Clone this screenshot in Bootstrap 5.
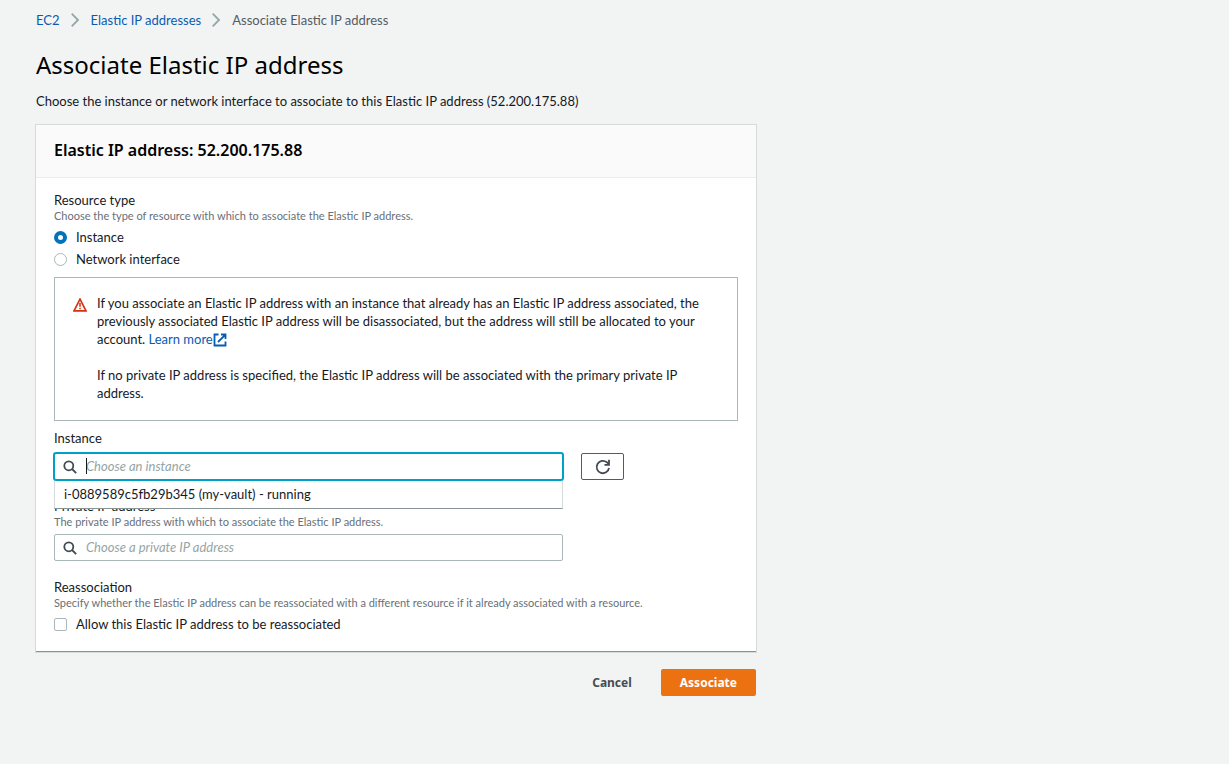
<!DOCTYPE html>
<html lang="en">
<head>
<meta charset="utf-8">
<meta name="viewport" content="width=device-width, initial-scale=1">
<title>Associate Elastic IP address</title>
<link href="https://cdn.jsdelivr.net/npm/bootstrap@5.3.0/dist/css/bootstrap.min.css" rel="stylesheet">
<style>
  body { background: #f2f4f4; color: #16191f; font-family: Lato, "Noto Sans", sans-serif; font-size: 13px; line-height: 18px; }
  a { color: #0a5bb0; text-decoration: none; }
  a:hover { text-decoration: underline; }
  .page { padding: 11px 36px 36px; }
  .page-col { max-width: 720px; }
  .breadcrumb { gap: 11px; margin-bottom: 21px; }
  .crumb-now { color: #545b64; }
  h1, h2, .btn { font-family: "Noto Sans", sans-serif; }
  h1 { font-size: 24px; line-height: 30px; font-weight: 400; color: #000; margin-bottom: 12px; }
  h2 { font-size: 16px; line-height: 22px; font-weight: 600; color: #000; }
  .panel { background: #fff; border-radius: 0; border: 0; outline: 1px solid #d5dbdb; border-bottom: 1px solid #879596; margin-top: 15px; }
  .panel > .card-header { background: #fafafa; border-bottom: 1px solid #eaeded; padding: 14px 18px 16px; border-radius: 0; }
  .panel > .card-body { padding: 14px 18px 18px; }
  .field-name { display: block; font-size: 13px; line-height: 16px; margin: 0; float: none; }
  .field-gap { margin-bottom: 7px; }
  .group { margin-top: 18px; }
  .hint { font-size: 11px; line-height: 16px; color: #687078; margin: 0 0 4px; }
  .form-check { display: flex; align-items: center; gap: 9px; min-height: 18px; padding: 0; margin: 0; }
  .form-check .form-check-input { float: none; margin: 0; width: 13px; height: 13px; border: 1px solid #aab7b8; box-shadow: none; }
  .form-check .form-check-input[type=checkbox] { border-radius: 2px; }
  .form-check .form-check-input[type=radio]:checked { background: #fff; border: 4px solid #0073bb; }
  .notice { border: 1px solid #aab7b8; border-radius: 0; padding: 16px 18px 18px; margin: 9px 0; gap: 10px; color: #16191f; }
  .search { position: relative; max-width: 509px; }
  .search .glass { position: absolute; left: 9px; top: 7px; pointer-events: none; }
  .search .form-control { height: 27px; padding: 0 10px 1px 31px; border: 1px solid #aab7b8; border-radius: 2px; font-size: 13px; line-height: 18px; }
  .search .form-control::placeholder { color: #95a5a6; font-style: italic; opacity: 1; }
  .search .form-control.is-open { border-color: #00a1c9; box-shadow: 0 0 0 1px #00a1c9; }
  .caret { position: absolute; left: 32px; top: 5px; width: 1px; height: 16px; background: #16191f; }
  .search .dropdown-menu { width: 100%; top: 100%; margin-top: 1px; padding: 0; min-width: 0; border: 1px solid #d5dbdb; border-top: 0; border-bottom-color: #879596; border-radius: 0; font-size: 13px; }
  .search .dropdown-item { padding: 4px 9px 5px; color: #16191f; line-height: 18px; }
  .instance-row { gap: 18px; }
  .actions { gap: 19px; margin-top: 17px; }
  .btn { font-size: 12px; line-height: 19px; font-weight: 700; border-radius: 2px; border: 0; }
  .btn-reload { width: 43px; height: 27px; padding: 0; border: 1px solid #545b64; background: #fff; }
  .btn-plain { color: #444c56; padding: 4px 10px; }
  .btn-go, .btn-go:hover { background: #ec7211; color: #fff; padding: 4px 19px; }
</style>
</head>
<body>
<main class="page">
  <nav aria-label="breadcrumb">
    <ol class="breadcrumb align-items-center">
      <li><a href="#">EC2</a></li>
      <li class="d-flex" aria-hidden="true"><svg width="9" height="14" viewBox="0 0 9 14" fill="none" stroke="#95a5a6" stroke-width="1.800"><path d="M.7.7L7 7 .7 13.300"/></svg></li>
      <li><a href="#">Elastic IP addresses</a></li>
      <li class="d-flex" aria-hidden="true"><svg width="9" height="14" viewBox="0 0 9 14" fill="none" stroke="#95a5a6" stroke-width="1.800"><path d="M.7.7L7 7 .7 13.300"/></svg></li>
      <li class="crumb-now" aria-current="page">Associate Elastic IP address</li>
    </ol>
  </nav>
  <h1>Associate Elastic IP address</h1>
  <p class="mb-0">Choose the instance or network interface to associate to this Elastic IP address (52.200.175.88)</p>

  <form class="page-col">
    <section class="card panel">
      <div class="card-header"><h2 class="mb-0">Elastic IP address: 52.200.175.88</h2></div>
      <div class="card-body">
        <fieldset>
          <legend class="field-name">Resource type</legend>
          <p class="hint">Choose the type of resource with which to associate the Elastic IP address.</p>
          <div class="d-grid gap-1">
            <div class="form-check"><input class="form-check-input" type="radio" name="kind" id="kind-instance" checked><label for="kind-instance">Instance</label></div>
            <div class="form-check"><input class="form-check-input" type="radio" name="kind" id="kind-network"><label for="kind-network">Network interface</label></div>
          </div>
        </fieldset>

        <div class="notice d-flex align-items-start" role="note">
          <svg class="flex-shrink-0 mt-1" width="14" height="14" viewBox="0 0 14 14" fill="none" stroke="#d13212"><path d="M7 1.200L13 12.800H1z" stroke-width="1.700"/><path d="M7 5v3.700M7 9.700v1.500" stroke-width="1.500"/></svg>
          <div>
            <p class="mb-0">If you associate an Elastic IP address with an instance that already has an Elastic IP address associated, the previously associated Elastic IP address will be disassociated, but the address will still be allocated to your account. <a href="#">Learn more<svg class="align-text-bottom" width="14" height="14" viewBox="0 0 14 14" fill="none" stroke="#0a5bb0" stroke-width="1.800"><path d="M5.500 1.500H1.500v11h11V8.500M8 1.500h4.500V6M12.200 1.800L5 9"/></svg></a></p>
            <br>
            <p class="mb-0">If no private IP address is specified, the Elastic IP address will be associated with the primary private IP address.</p>
          </div>
        </div>

        <label class="field-name field-gap" for="instance">Instance</label>
        <div class="d-flex instance-row">
          <div class="search flex-grow-1">
            <input class="form-control is-open" id="instance" type="text" placeholder="Choose an instance" autocomplete="off">
            <svg class="glass" width="14" height="14" viewBox="0 0 14 14" fill="none" stroke="#414b56" stroke-width="1.800"><circle cx="5.800" cy="5.800" r="4.500"/><path d="M9 9l4.200 4.200"/></svg>
            <span class="caret"></span>
            <ul class="dropdown-menu show">
              <li><button class="dropdown-item" type="button">i-0889589c5fb29b345 (my-vault) - running</button></li>
            </ul>
          </div>
          <button class="btn btn-reload d-flex align-items-center justify-content-center" type="button" aria-label="Refresh"><svg width="16" height="16" viewBox="0 0 16 16" fill="none" stroke="#414b56" stroke-width="1.800"><path d="M14 9A6.200 6.200 0 1 1 11.800 3.200L13.800 5.200"/><path d="M14 .800v5H9.500"/></svg></button>
        </div>

        <div class="group">
          <label class="field-name" for="private-ip">Private IP address</label>
          <p class="hint">The private IP address with which to associate the Elastic IP address.</p>
          <div class="search">
            <input class="form-control" id="private-ip" type="text" placeholder="Choose a private IP address">
            <svg class="glass" width="14" height="14" viewBox="0 0 14 14" fill="none" stroke="#414b56" stroke-width="1.800"><circle cx="5.800" cy="5.800" r="4.500"/><path d="M9 9l4.200 4.200"/></svg>
          </div>
        </div>

        <fieldset class="group">
          <legend class="field-name">Reassociation</legend>
          <p class="hint">Specify whether the Elastic IP address can be reassociated with a different resource if it already associated with a resource.</p>
          <div class="form-check"><input class="form-check-input" type="checkbox" id="allow"><label for="allow">Allow this Elastic IP address to be reassociated</label></div>
        </fieldset>
      </div>
    </section>
    <div class="d-flex justify-content-end actions">
      <button class="btn btn-plain" type="button">Cancel</button>
      <button class="btn btn-go" type="submit">Associate</button>
    </div>
  </form>
</main>
<script src="https://cdn.jsdelivr.net/npm/bootstrap@5.3.0/dist/js/bootstrap.bundle.min.js"></script>
</body>
</html>
